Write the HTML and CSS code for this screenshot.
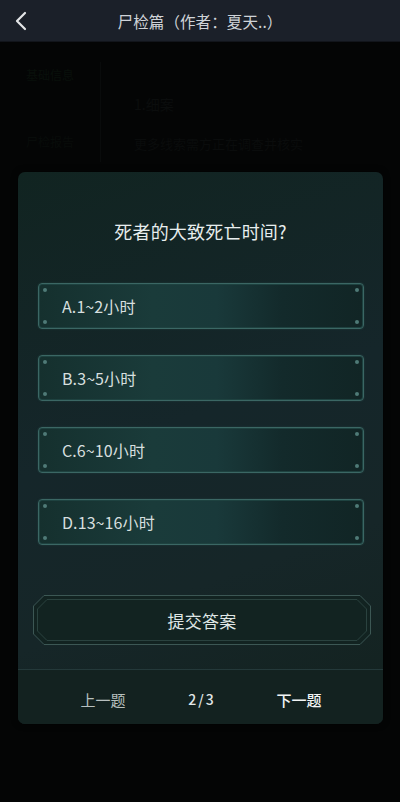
FILE: index.html
```html
<!DOCTYPE html>
<html lang="zh">
<head>
<meta charset="utf-8">
<link rel="stylesheet" href="styles.css">
</head>
<body>
<div class="app">
  <header class="topbar">
    <svg class="back" width="14" height="20" viewBox="0 0 14 20"><path d="M11 2 L3 10 L11 18" fill="none" stroke="#e4e6e8" stroke-width="2.2" stroke-linecap="round" stroke-linejoin="round"/></svg>
    <div class="title">尸检篇（作者：夏天..）</div>
  </header>
  <main class="bg">
    <div class="side">
      <div class="side-item">基础信息</div>
      <div class="side-item low">尸检报告</div>
      <div class="side-item low2">线索</div>
    </div>
    <div class="content">
      <div class="c-title">1.细案</div>
      <div class="c-text">更多线索需方正在调查并核实</div>
    </div>
  </main>
  <div class="modal">
    <div class="question">死者的大致死亡时间?</div>
    <div class="options">
      <div class="opt"><span>A.1~2小时</span><i class="d tl"></i><i class="d tr"></i><i class="d bl"></i><i class="d br"></i></div>
      <div class="opt"><span>B.3~5小时</span><i class="d tl"></i><i class="d tr"></i><i class="d bl"></i><i class="d br"></i></div>
      <div class="opt"><span>C.6~10小时</span><i class="d tl"></i><i class="d tr"></i><i class="d bl"></i><i class="d br"></i></div>
      <div class="opt"><span>D.13~16小时</span><i class="d tl"></i><i class="d tr"></i><i class="d bl"></i><i class="d br"></i></div>
    </div>
    <div class="submit-wrap">
      <svg class="submit-frame" width="338" height="50" viewBox="0 0 338 50">
        <polygon points="11,0.5 327,0.5 337.5,11 337.5,39 327,49.5 11,49.5 0.5,39 0.5,11" fill="#122321" stroke="#3c5754" stroke-width="1"/>
        <polygon points="14,4.5 324,4.5 333.5,14 333.5,36 324,45.5 14,45.5 4.5,36 4.5,14" fill="none" stroke="#2a423f" stroke-width="1"/>
      </svg>
      <div class="submit-text">提交答案</div>
    </div>
    <div class="footer">
      <div class="f-btn prev">上一题</div>
      <div class="f-page">2 / 3</div>
      <div class="f-btn next">下一题</div>
    </div>
  </div>
</div>
</body>
</html>
```
FILE: styles.css
```css
* { box-sizing: border-box; }
html, body { margin: 0; padding: 0; }
body {
  width: 400px;
  height: 802px;
  background: #040505;
  font-family: "Noto Sans CJK SC", "Noto Sans", sans-serif;
  overflow: hidden;
}
.app { position: relative; width: 400px; height: 802px; }
.topbar {
  height: 42px;
  background: #1b2029;
  display: flex;
  align-items: center;
  justify-content: center;
  position: relative;
  border-bottom: 1px solid #12151b;
}
.back { position: absolute; left: 14px; top: 11px; }
.title {
  color: #cfd3d8;
  font-size: 15.5px;
  letter-spacing: 0.1px;
}
.bg {
  display: flex;
  padding-top: 20px;
}
.side {
  width: 101px;
  border-right: 1px solid #090b0b;
  height: 100px;
  display: flex;
  flex-direction: column;
  align-items: center;
  gap: 50px;
  padding-top: 4px;
}
.side-item { color: #09100b; font-size: 12px; }
.side-item.low { color: #080c0a; }
.side-item.low2 { color: #070a0a; }
.content { padding-left: 33px; padding-top: 32px; }
.c-title { color: #0b0d0d; font-size: 14px; }
.c-text { color: #0a0c0c; font-size: 13px; margin-top: 20px; }

.modal {
  position: absolute;
  left: 18px;
  top: 172px;
  width: 365px;
  height: 552px;
  border-radius: 7px;
  background: linear-gradient(160deg, #112421 0%, #15262a 45%, #162628 70%, #13221f 100%);
  display: flex;
  flex-direction: column;
  align-items: center;
  box-shadow: 0 0 6px rgba(0,0,0,0.6);
}
.question {
  margin-top: 46px;
  color: #e8eeee;
  font-size: 18px;
  line-height: 26px;
  letter-spacing: 0.2px;
}
.options {
  margin-top: 39px;
  display: flex;
  flex-direction: column;
  gap: 26px;
  width: 326px;
  margin-left: 20px;
  align-self: flex-start;
}
.opt {
  position: relative;
  height: 46px;
  border-radius: 4px;
  border: 1px solid #3b6764;
  box-shadow: inset 0 0 0 1px #1e4240, 0 0 2px rgba(60,120,115,0.35);
  background: linear-gradient(90deg, #15302e 0%, #1a3b3a 35%, #19393a 55%, #132a2b 75%, #112525 100%);
  display: flex;
  align-items: center;
  padding-left: 23px;
}
.opt span {
  color: #d6dfdf;
  font-size: 16px;
  letter-spacing: 0.1px;
}
.d {
  position: absolute;
  width: 4px;
  height: 4px;
  border-radius: 50%;
  background: #4f7a77;
}
.d.tl { left: 4px; top: 4px; }
.d.tr { right: 4px; top: 4px; }
.d.bl { left: 4px; bottom: 4px; }
.d.br { right: 4px; bottom: 4px; }

.submit-wrap {
  position: relative;
  margin-top: 50px;
  width: 338px;
  height: 50px;
  margin-left: 15px;
  align-self: flex-start;
  display: flex;
  align-items: center;
  justify-content: center;
}
.submit-frame { position: absolute; left: 0; top: 0; }
.submit-text {
  position: relative;
  color: #dfe6e5;
  font-size: 17px;
  letter-spacing: 0.3px;
}
.footer {
  margin-top: 24px;
  width: 100%;
  border-top: 1px solid #24393a;
  flex: 1;
  display: flex;
  align-items: center;
  padding-left: 36px;
  padding-top: 4px;
  background: #132220;
  border-radius: 0 0 7px 7px;
}
.f-btn, .f-page { width: 98px; text-align: center; }
.f-btn { font-size: 15px; }
.prev { color: #b7c0bf; }
.f-page { color: #e2e8e8; font-size: 14px; font-weight: 500; word-spacing: -1px; }
.next { color: #f2f5f5; font-weight: 500; }
```
